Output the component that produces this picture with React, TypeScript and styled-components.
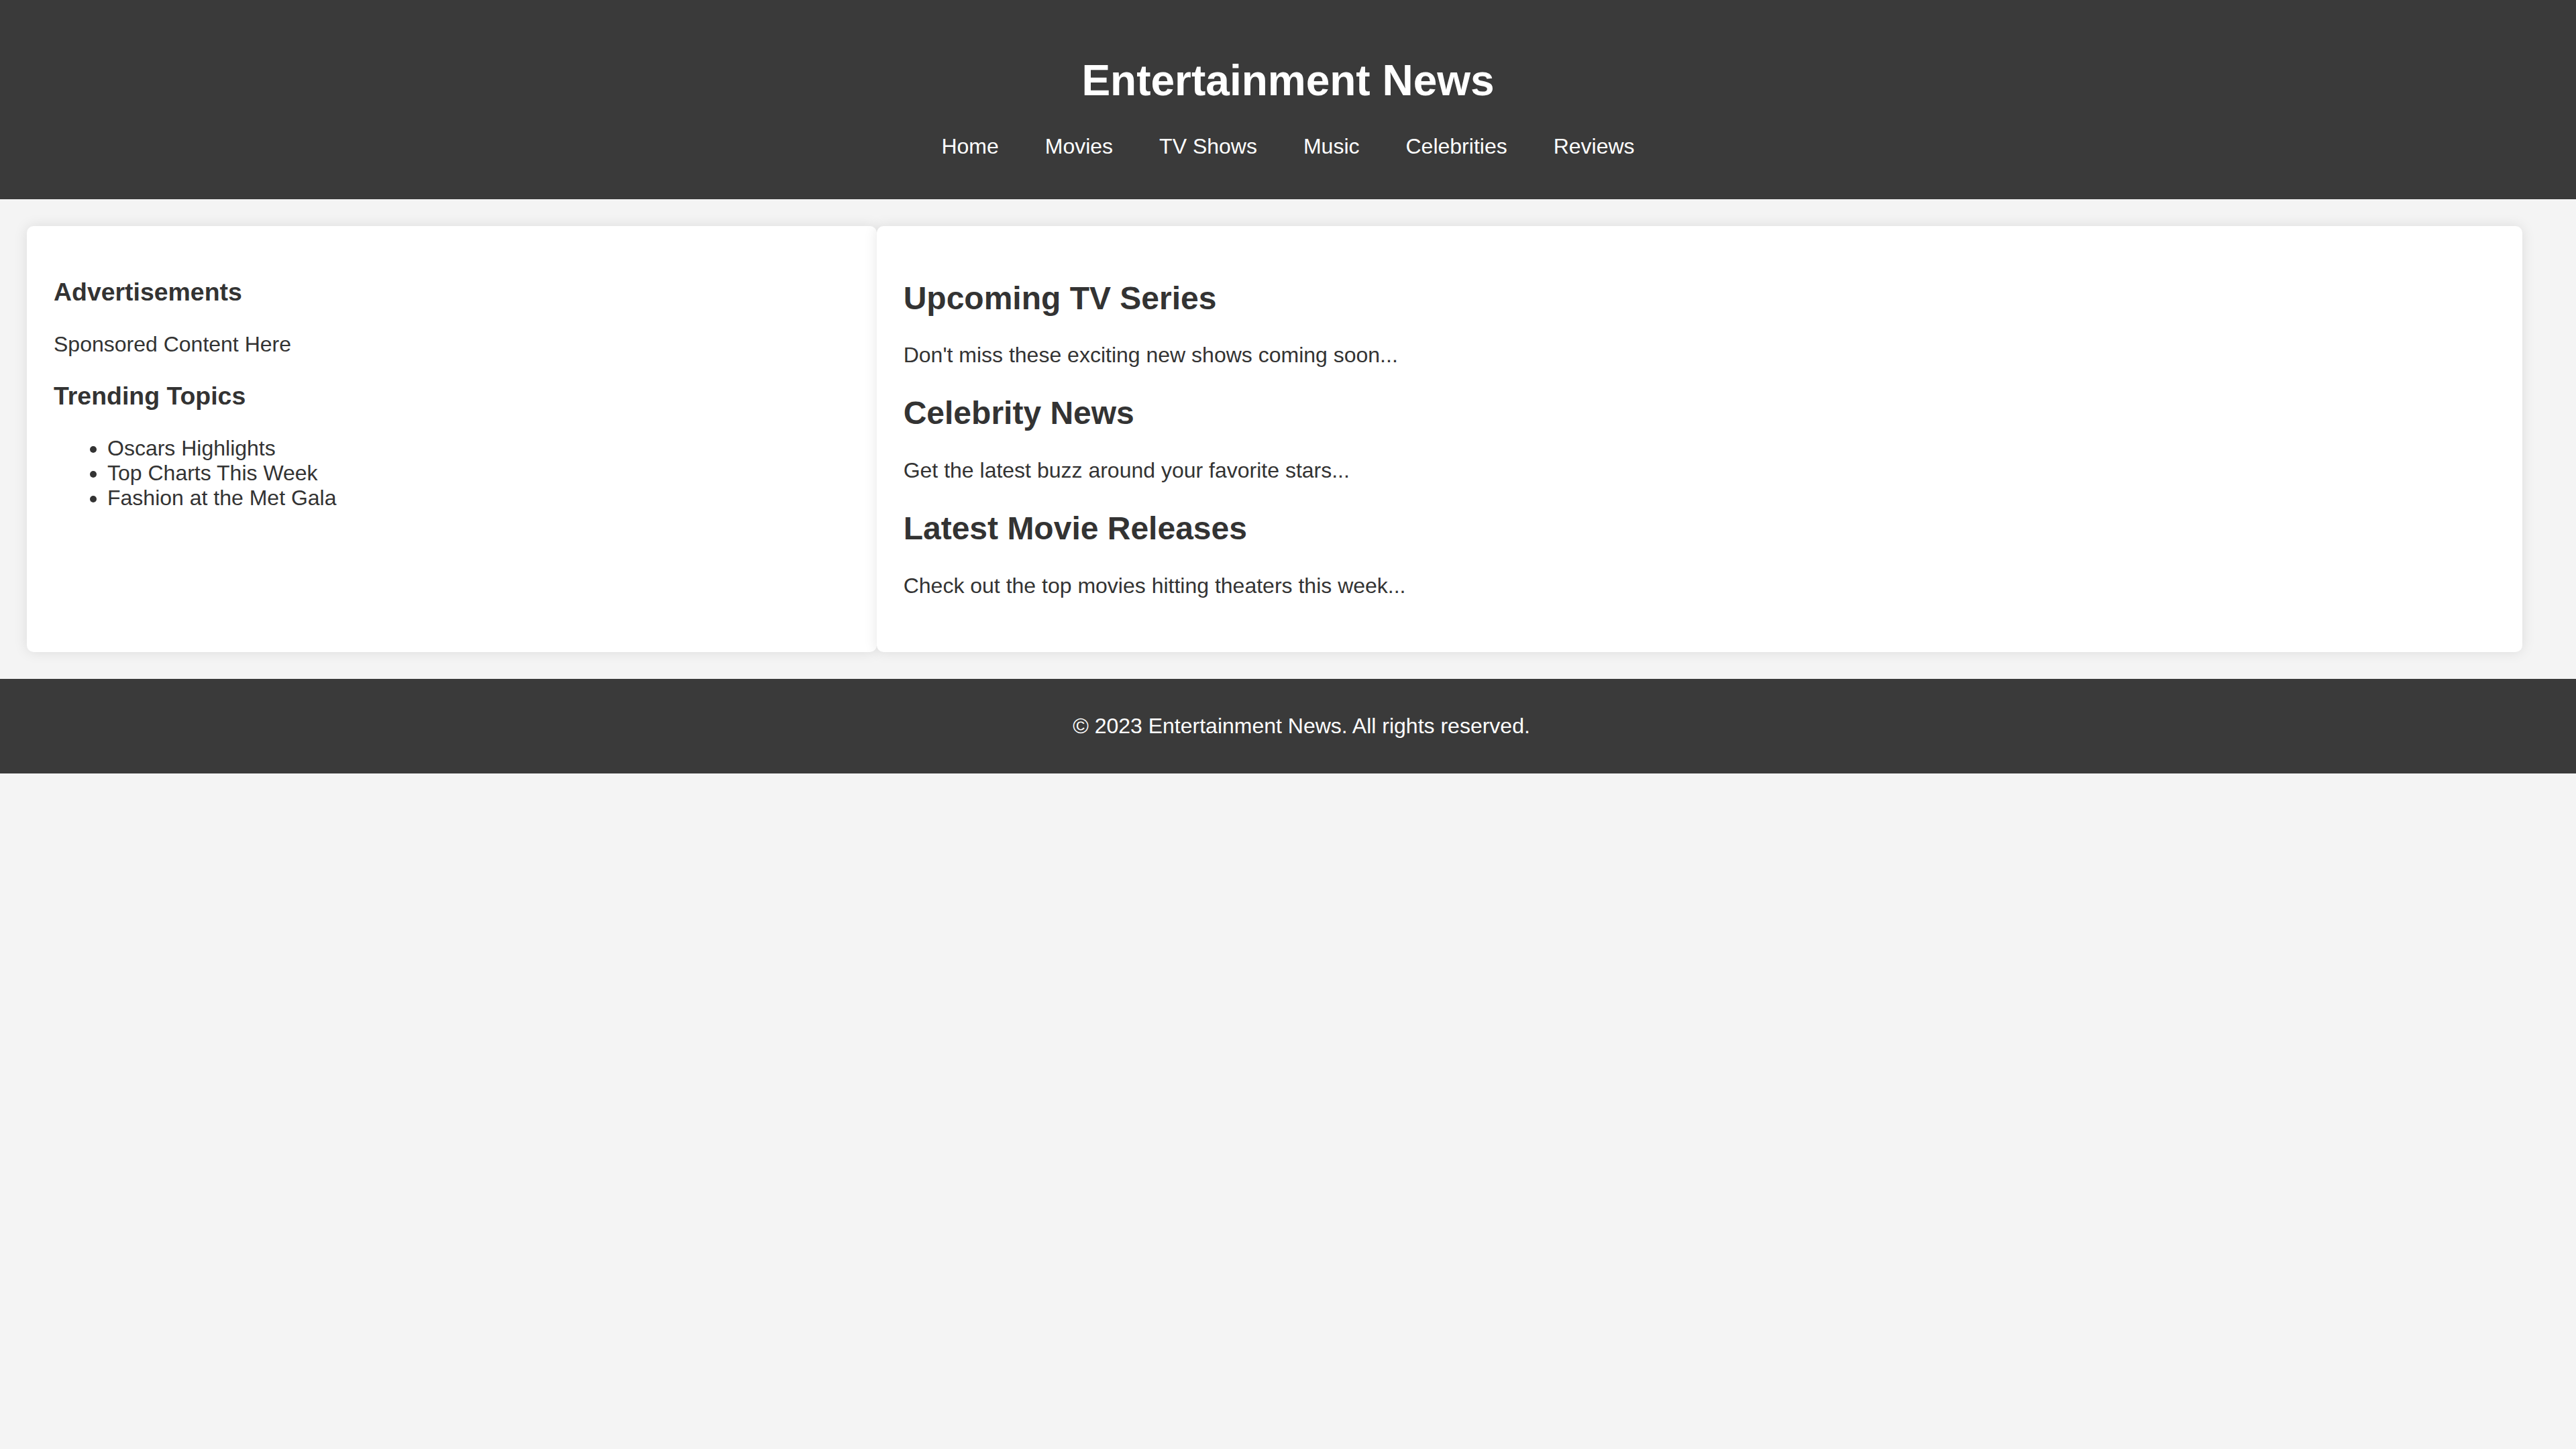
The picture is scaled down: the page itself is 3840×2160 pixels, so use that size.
import React from "react";
import styled, { createGlobalStyle } from "styled-components";

const GlobalStyle = createGlobalStyle`
  html, body {
    margin: 0;
    padding: 0;
  }
  body {
    font-family: "Liberation Sans", Arial, sans-serif;
    font-size: 32px;
    line-height: normal;
    background: #f4f4f4;
    color: #333;
  }
`;

const Header = styled.header`
  background: #3a3a3a;
  color: #fff;
  text-align: center;
  padding: 40px 0;
`;

const Title = styled.h1`
  font-size: 64px;
  font-weight: bold;
  margin: 42.88px 0;
`;

const NavList = styled.ul`
  list-style: none;
  margin: 0;
  padding: 0 0 20px;
  display: flex;
  justify-content: center;
  gap: 69px;
`;

const NavItem = styled.li`
  display: block;
`;

const NavLink = styled.a`
  color: #fff;
  text-decoration: none;
  font-size: 32px;
`;

const Main = styled.main`
  display: flex;
  align-items: stretch;
  padding: 40px 80px 40px 40px;
`;

const Card = styled.section<{ $grow: number }>`
  flex: ${(p) => p.$grow} 1 0;
  box-sizing: content-box;
  min-width: 0;
  background: #fff;
  padding: 40px;
  border-radius: 10px;
  box-shadow: 0 0 20px rgba(0, 0, 0, 0.1);
`;

const SideHeading = styled.h3`
  font-size: 37.44px;
  font-weight: bold;
  margin: 37.44px 0;
`;

const Text = styled.p`
  font-size: 32px;
  margin: 32px 0;
`;

const TopicList = styled.ul`
  margin: 32px 0;
  padding-left: 80px;
  list-style: disc;
`;

const Topic = styled.li`
  font-size: 32px;
`;

const Article = styled.article`
  margin-bottom: 40px;
`;

const ArticleHeading = styled.h2`
  font-size: 48px;
  font-weight: bold;
  margin: 39.84px 0;
`;

const Footer = styled.footer`
  background: #3a3a3a;
  color: #fff;
  text-align: center;
  padding: 20px 0 20px 40px;
`;

const FooterText = styled.p`
  margin: 32px 0;
  font-size: 32px;
`;

const navItems = ["Home", "Movies", "TV Shows", "Music", "Celebrities", "Reviews"];

const articles = [
  { title: "Upcoming TV Series", text: "Don't miss these exciting new shows coming soon..." },
  { title: "Celebrity News", text: "Get the latest buzz around your favorite stars..." },
  { title: "Latest Movie Releases", text: "Check out the top movies hitting theaters this week..." },
];

const topics = ["Oscars Highlights", "Top Charts This Week", "Fashion at the Met Gala"];

export default function App() {
  return (
    <>
      <GlobalStyle />
      <Header>
        <Title>Entertainment News</Title>
        <nav>
          <NavList>
            {navItems.map((item) => (
              <NavItem key={item}>
                <NavLink href="#">{item}</NavLink>
              </NavItem>
            ))}
          </NavList>
        </nav>
      </Header>
      <Main>
        <Card as="aside" $grow={1}>
          <SideHeading>Advertisements</SideHeading>
          <Text>Sponsored Content Here</Text>
          <SideHeading>Trending Topics</SideHeading>
          <TopicList>
            {topics.map((t) => (
              <Topic key={t}>{t}</Topic>
            ))}
          </TopicList>
        </Card>
        <Card $grow={2}>
          {articles.map((a) => (
            <Article key={a.title}>
              <ArticleHeading>{a.title}</ArticleHeading>
              <Text>{a.text}</Text>
            </Article>
          ))}
        </Card>
      </Main>
      <Footer>
        <FooterText>© 2023 Entertainment News. All rights reserved.</FooterText>
      </Footer>
    </>
  );
}
